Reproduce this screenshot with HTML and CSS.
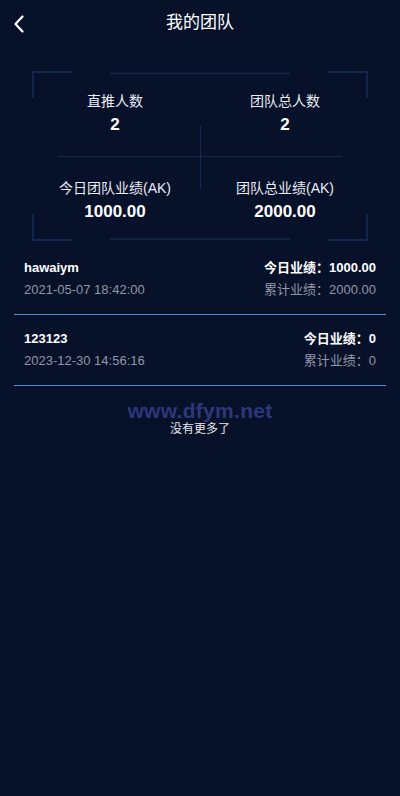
FILE: index.html
```html
<!DOCTYPE html>
<html lang="zh-CN">
<head>
    <meta charset="UTF-8">
    <meta name="viewport" content="width=device-width, initial-scale=1.0">
    <title>我的团队</title>
    <link rel="stylesheet" href="styles.css">
</head>
<body>

<!-- Header -->
<div class="header">
    <a class="back">
        <svg width="12" height="18" viewBox="0 0 12 18">
            <path d="M9.5 1.5 L2.5 9 L9.5 16.5" fill="none" stroke="#fff" stroke-width="2.2" stroke-linecap="round" stroke-linejoin="round"/>
        </svg>
    </a>
    <h2 class="title">我的团队</h2>
</div>

<!-- Summary card -->
<div class="summary">
    <svg class="frame" width="340" height="172" viewBox="0 0 340 172">
        <g stroke="#15264b" stroke-width="2" fill="none">
            <path d="M1 2 H42 M3 2 V28"/>
            <path d="M298 2 H339 M337 2 V28"/>
            <path d="M1 170 H42 M3 170 V144"/>
            <path d="M298 170 H339 M337 170 V144"/>
        </g>
        <g stroke="#122345" stroke-width="2">
            <path d="M80 3.5 H260"/>
            <path d="M80 169 H260"/>
        </g>
    </svg>
    <div class="cell cell-top">
        <div class="label">直推人数</div>
        <div class="value">2</div>
    </div>
    <div class="cell cell-top">
        <div class="label">团队总人数</div>
        <div class="value">2</div>
    </div>
    <div class="cell cell-bottom">
        <div class="label">今日团队业绩(AK)</div>
        <div class="value">1000.00</div>
    </div>
    <div class="cell cell-bottom">
        <div class="label">团队总业绩(AK)</div>
        <div class="value">2000.00</div>
    </div>
</div>

<!-- Member list -->
<div class="member-list">
    <div class="member">
        <div class="member-left">
            <div class="member-name">hawaiym</div>
            <div class="member-time">2021-05-07 18:42:00</div>
        </div>
        <div class="member-right">
            <div class="today">今日业绩：1000.00</div>
            <div class="total">累计业绩：2000.00</div>
        </div>
    </div>
    <div class="member">
        <div class="member-left">
            <div class="member-name">123123</div>
            <div class="member-time">2023-12-30 14:56:16</div>
        </div>
        <div class="member-right">
            <div class="today">今日业绩：0</div>
            <div class="total">累计业绩：0</div>
        </div>
    </div>
</div>

<div class="list-end">
    <div class="watermark">www.dfym.net</div>
    <div class="no-more">没有更多了</div>
</div>

</body>
</html>
```

FILE: styles.css
```css
body {
    margin: 0;
    min-height: 796px;
    background-color: #08112a;
    color: #fff;
    font-family: "Liberation Sans", Arial, "Noto Sans CJK SC", sans-serif;
}

.header {
    height: 46px;
    display: flex;
    align-items: center;
    justify-content: center;
    position: relative;
}

.back {
    position: absolute;
    left: 13px;
    top: 15px;
    display: flex;
}

.title {
    margin: 0;
    font-size: 17px;
    font-weight: normal;
    line-height: 46px;
    color: #fff;
}

/* Summary card with corner frame */
.summary {
    position: relative;
    width: 340px;
    height: 172px;
    margin: 24px 30px 2px;
    display: grid;
    grid-template-columns: 1fr 1fr;
    grid-template-rows: 87px 85px;
}

.frame {
    position: absolute;
    left: 0;
    top: 0;
}

/* the cross in the middle */
.summary::before {
    content: "";
    position: absolute;
    left: 28px;
    right: 28px;
    top: 86px;
    height: 1px;
    background-color: #172a52;
}

.summary::after {
    content: "";
    position: absolute;
    left: 170px;
    top: 56px;
    width: 1px;
    height: 63px;
    background-color: #172a52;
}

.cell {
    display: flex;
    flex-direction: column;
    align-items: center;
}

.cell-top {
    padding-top: 21px;
}

.cell-bottom {
    padding-top: 21px;
}

.label {
    font-size: 14px;
    line-height: 20px;
    color: #e9ecf3;
}

.value {
    margin-top: 2px;
    font-size: 17px;
    font-weight: bold;
    line-height: 24px;
    color: #fff;
}

/* Member rows */
.member-list {
    padding: 0 14px;
}

.member {
    display: flex;
    justify-content: space-between;
    padding: 13px 10px;
    border-bottom: 1px solid #5f86d4;
}

.member-name,
.today {
    font-size: 13px;
    font-weight: bold;
    line-height: 22px;
    color: #fff;
}

.member-time,
.total {
    font-size: 13px;
    line-height: 22px;
    color: #9197a4;
}

.member-right {
    text-align: right;
}

.list-end {
    display: flex;
    flex-direction: column;
    align-items: center;
    padding-top: 16px;
}

.watermark {
    font-size: 21px;
    font-weight: bold;
    line-height: 18px;
    color: #2c3879;
    letter-spacing: 0.3px;
}

.no-more {
    margin-top: 1px;
    font-size: 12px;
    line-height: 16px;
    color: #e6e8ee;
}
```
